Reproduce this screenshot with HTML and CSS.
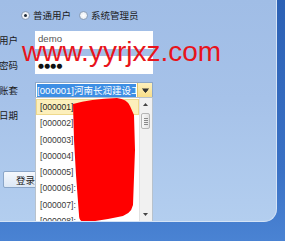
FILE: index.html
```html
<!DOCTYPE html>
<html>
<head>
<meta charset="utf-8">
<link rel="stylesheet" href="styles.css">
</head>
<body>
<div class="screen">
  <div class="panel">
    <div class="roles">
      <span class="role"><span class="radio checked"></span>普通用户</span>
      <span class="role"><span class="radio"></span>系统管理员</span>
    </div>
    <div class="form">
      <div class="row"><span class="lbl">用户</span><div class="field">demo</div></div>
      <div class="row"><span class="lbl">密码</span><div class="field pw">●●●●</div></div>
      <div class="row"><span class="lbl">账套</span>
        <div class="combo">
          <span class="combo-text">[000001]河南长润建设工</span>
          <span class="combo-btn"><svg width="7" height="5" viewBox="0 0 7 5"><path d="M0 0H7M1 1.5H6L3.5 4.5Z" stroke="#333" stroke-width="1" fill="#333"/></svg></span>
        </div>
      </div>
      <div class="row"><span class="lbl">日期</span><div class="field"></div></div>
    </div>
    <button class="login">登录</button>

    <div class="list">
      <div class="items">
        <div class="item hover">[000001]</div>
        <div class="item">[000002]</div>
        <div class="item">[000003]</div>
        <div class="item">[000004]</div>
        <div class="item">[000005]</div>
        <div class="item">[000006]:</div>
        <div class="item">[000007]:</div>
        <div class="item">[000008]:</div>
      </div>
      <div class="sbar">
        <span class="sb-up"><svg width="5" height="3" viewBox="0 0 5 3"><path d="M2.5 0L5 3H0Z" fill="#444"/></svg></span>
        <span class="sb-thumb"><i></i><i></i><i></i><i></i></span>
        <span class="sb-down"><svg width="5" height="3" viewBox="0 0 5 3"><path d="M0 0H5L2.5 3Z" fill="#444"/></svg></span>
      </div>
    </div>

    <div class="watermark">www.yyrjxz.com</div>
    <svg class="blob" width="285" height="241" viewBox="0 0 285 241">
      <path d="M73 104 Q90 99 117 98 Q127 99 130 106 L134 115 L135 150 L133 205 Q131 215 118 217 Q100 221 85 222 Q79 222 79 215 L76 175 L74 140 Z" fill="#ff0000"/>
    </svg>
  </div>
</div>
</body>
</html>
```

FILE: styles.css
```css
html, body {
  margin: 0;
  padding: 0;
}
body {
  width: 285px;
  height: 241px;
  overflow: hidden;
  font-family: "Noto Sans CJK SC", "Liberation Sans", sans-serif;
}
.screen {
  width: 285px;
  height: 241px;
  background: linear-gradient(180deg, #2c61b5 0%, #3a71c5 70%, #4a83d3 100%);
}
.panel {
  position: relative;
  width: 276px;
  height: 221px;
  background: linear-gradient(180deg, #a0bde6 0%, #a6c2e9 45%, #b3ceef 100%);
  border-right: 1px solid #d4e3f6;
  border-bottom: 1px solid #d4e3f6;
  border-bottom-right-radius: 13px;
  overflow: hidden;
}
.roles {
  display: flex;
  padding-top: 9px;
  padding-left: 21px;
  gap: 8px;
  height: 12px;
  align-items: center;
  font-size: 9.5px;
  line-height: 12px;
  color: #1a1a1a;
}
.role {
  display: flex;
  align-items: center;
  gap: 3px;
}
.radio {
  width: 7px;
  height: 7px;
  border-radius: 50%;
  border: 1px solid #8c9fb8;
  background: radial-gradient(circle, #ffffff 0%, #dfe6ef 100%);
  position: relative;
}
.radio.checked::after {
  content: "";
  position: absolute;
  left: 2px;
  top: 2px;
  width: 3px;
  height: 3px;
  border-radius: 50%;
  background: #1f2c3c;
}
.form {
  margin-top: 10px;
  margin-left: -1px;
  display: flex;
  flex-direction: column;
  gap: 7px;
}
.row {
  display: flex;
  align-items: center;
  height: 18px;
}
.lbl {
  width: 36px;
  font-size: 9.5px;
  color: #1a1a1a;
  line-height: 18px;
}
.field {
  width: 118px;
  height: 18px;
  background: #ffffff;
  box-sizing: border-box;
  padding-left: 3px;
  font-family: "Liberation Sans", sans-serif;
  font-size: 9.6px;
  line-height: 15px;
  color: #555;
}
.field.pw {
  font-family: "DejaVu Sans", sans-serif;
  font-size: 6.8px;
  line-height: 21px;
  color: #111;
  letter-spacing: 0.2px;
}
.combo {
  width: 118px;
  height: 17px;
  box-sizing: border-box;
  border: 1px solid #8ea8c8;
  background: #fff;
  display: flex;
  align-items: stretch;
}
.combo-text {
  flex: 1;
  margin: 1px;
  background: #3d8ee4;
  color: #fff;
  font-size: 9.5px;
  line-height: 13px;
  white-space: nowrap;
  overflow: hidden;
  font-family: "Liberation Sans", "Noto Sans CJK SC", sans-serif;
}
.combo-btn {
  width: 14px;
  background: linear-gradient(180deg, #fdf0bd 0%, #f8dd86 100%);
  border-left: 1px solid #e1c36a;
  display: flex;
  align-items: center;
  justify-content: center;
}
.login {
  display: block;
  margin-top: 47px;
  margin-left: 3px;
  width: 45px;
  height: 17px;
  padding: 0 0 0 12px;
  text-align: left;
  border: 1px solid #8ba6c8;
  border-radius: 2px;
  background: linear-gradient(180deg, #f5f8fd 0%, #dde8f5 100%);
  font-family: "Noto Sans CJK SC", sans-serif;
  font-size: 9.5px;
  line-height: 14px;
  color: #1a1a1a;
}
.list {
  position: absolute;
  left: 35px;
  top: 97px;
  width: 118px;
  height: 125px;
  box-sizing: border-box;
  border: 1px solid #b8c2cc;
  background: #fff;
  display: flex;
  overflow: hidden;
}
.items {
  flex: 1;
  padding-top: 1px;
}
.item {
  height: 16.3px;
  line-height: 16px;
  padding-left: 4px;
  box-sizing: border-box;
  font-family: "Liberation Sans", sans-serif;
  font-size: 8.6px;
  color: #3a3a3a;
  white-space: nowrap;
}
.item.hover {
  background: #fcefbb;
  border: 1px solid #efd98c;
  padding-left: 3px;
  line-height: 14px;
  color: #222;
}
.sbar {
  width: 12px;
  background: #f1f1f1;
  border-left: 1px solid #e2e2e2;
  position: relative;
}
.sb-up {
  position: absolute;
  left: 3px;
  top: 5px;
  display: flex;
}
.sb-thumb {
  position: absolute;
  left: 1px;
  top: 15px;
  width: 9px;
  height: 16px;
  box-sizing: border-box;
  border: 1px solid #b5b5b5;
  border-radius: 2px;
  background: linear-gradient(90deg, #f7f7f7, #e3e3e3);
  display: flex;
  flex-direction: column;
  justify-content: center;
  align-items: center;
  gap: 1px;
}
.sb-thumb i {
  display: block;
  width: 4px;
  height: 1px;
  background: #888;
}
.sb-down {
  position: absolute;
  left: 3px;
  top: 115px;
  display: flex;
}
.watermark {
  position: absolute;
  left: 22px;
  top: 38px;
  font-family: "Liberation Sans", sans-serif;
  font-size: 28px;
  line-height: 28px;
  color: #e8141b;
  white-space: nowrap;
}
.blob {
  position: absolute;
  left: 0;
  top: 0;
}
```
